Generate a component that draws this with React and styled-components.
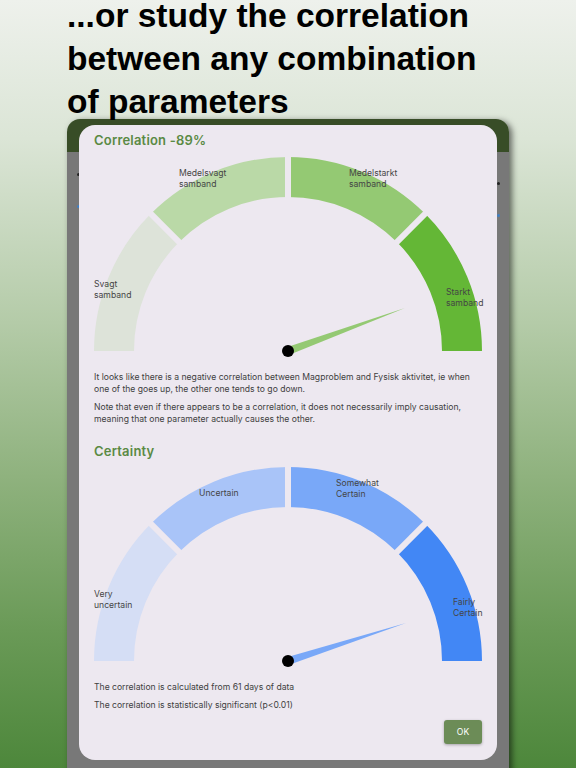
import React from "react";
import styled, { createGlobalStyle } from "styled-components";

const GlobalStyle = createGlobalStyle`
  html, body {
    margin: 0;
    padding: 0;
    overflow: hidden;
  }
`;

const Page = styled.div`
  width: 576px;
  height: 768px;
  overflow: hidden;
  background: linear-gradient(
    to bottom,
    #eef1ec 0%,
    #dbe5d6 18%,
    #b4cba8 42%,
    #8fb27e 62%,
    #6a9a57 82%,
    #4d873b 100%
  );
`;

const Headline = styled.h1`
  position: relative;
  z-index: 1;
  margin: -6px 0 0 67px;
  font-family: "Liberation Sans", Arial, sans-serif;
  font-weight: 700;
  font-size: 33.5px;
  line-height: 43px;
  color: #000;
  white-space: nowrap;
`;

const Device = styled.div`
  position: relative;
  margin: -4px 0 0 67px;
  width: 442px;
  height: 660px;
  box-sizing: border-box;
  padding: 6px 12px 0;
  border-radius: 13px 13px 0 0;
  background: linear-gradient(to bottom, #384d27 0, #384d27 33px, #787878 33px);
  box-shadow: 3px 2px 6px rgba(0, 0, 0, 0.55);
`;

const Peek = styled.span`
  position: absolute;
  left: ${(p) => p.x}px;
  top: ${(p) => p.y}px;
  width: ${(p) => p.w}px;
  height: 3px;
  border-radius: 2px;
  background: ${(p) => p.color};
`;

const Dialog = styled.div`
  position: relative;
  background: #ede8f0;
  border-radius: 16px;
  padding: 7px 15px 16px;
  font-family: Inter, "Noto Sans", sans-serif;
`;

const Heading = styled.h2`
  margin: ${(p) => p.top}px 0 0;
  font-size: 13px;
  line-height: 16px;
  font-weight: 600;
  letter-spacing: 0.2px;
  color: #5a8a44;
`;

const Text = styled.p`
  margin: ${(p) => p.top}px 0 0;
  font-size: 8.6px;
  line-height: 12px;
  color: #404040;
`;

const GaugeSvg = styled.svg`
  display: block;
  overflow: visible;
  margin-top: ${(p) => p.top}px;
  font-family: Inter, "Noto Sans", sans-serif;
  font-size: 8.6px;
`;

const Actions = styled.div`
  display: flex;
  justify-content: flex-end;
  margin-top: 9px;
`;

const OkButton = styled.button`
  width: 38px;
  height: 24px;
  border: none;
  border-radius: 3px;
  background: #6c8c57;
  color: #fff;
  font-family: Inter, "Noto Sans", sans-serif;
  font-size: 8.6px;
  box-shadow: 0 1px 3px rgba(0, 0, 0, 0.3);
`;

const W = 388;
const H = 202;
const CX = 194;
const CY = 195;
const R = 194;
const RI = 154;

function pt(r, deg) {
  const a = (deg * Math.PI) / 180;
  return [CX + r * Math.cos(a), CY - r * Math.sin(a)];
}

function sector(a1, a2) {
  const [x1, y1] = pt(R, a1);
  const [x2, y2] = pt(R, a2);
  const [x3, y3] = pt(RI, a2);
  const [x4, y4] = pt(RI, a1);
  return `M${x1} ${y1} A${R} ${R} 0 0 1 ${x2} ${y2} L${x3} ${y3} A${RI} ${RI} 0 0 0 ${x4} ${y4} Z`;
}

function Gauge({ top, colors, needle, tip, labels }) {
  const dx = tip[0] - CX;
  const dy = tip[1] - CY;
  const len = Math.hypot(dx, dy);
  const nx = (-dy / len) * 4;
  const ny = (dx / len) * 4;
  return (
    <GaugeSvg top={top} width={W} height={H} viewBox={`0 0 ${W} ${H}`}>
      {colors.map((c, i) => (
        <path key={i} d={sector(180 - i * 45, 135 - i * 45)} fill={c} />
      ))}
      {[135, 90, 45].map((a) => {
        const [x1, y1] = pt(RI - 4, a);
        const [x2, y2] = pt(R + 4, a);
        return <line key={a} x1={x1} y1={y1} x2={x2} y2={y2} stroke="#ede8f0" strokeWidth="6" />;
      })}
      {labels.map((l, i) => (
        <text key={i} x={l.x} y={l.y} fill="#454545">
          {l.lines.map((t, j) => (
            <tspan key={j} x={l.x} dy={j === 0 ? 0 : 11.5}>
              {t}
            </tspan>
          ))}
        </text>
      ))}
      <polygon
        points={`${CX + nx},${CY + ny} ${CX - nx},${CY - ny} ${tip[0]},${tip[1]}`}
        fill={needle}
      />
      <circle cx={CX} cy={CY} r="6" fill="#000" />
    </GaugeSvg>
  );
}

const correlationLabels = [
  { x: 0, y: 130.5, lines: ["Svagt", "samband"] },
  { x: 85, y: 19.5, lines: ["Medelsvagt", "samband"] },
  { x: 255, y: 19.5, lines: ["Medelstarkt", "samband"] },
  { x: 352, y: 138.5, lines: ["Starkt", "samband"] },
];

const certaintyLabels = [
  { x: 0, y: 130.5, lines: ["Very", "uncertain"] },
  { x: 105, y: 29.5, lines: ["Uncertain"] },
  { x: 242, y: 19.5, lines: ["Somewhat", "Certain"] },
  { x: 359, y: 138.5, lines: ["Fairly", "Certain"] },
];

export default function App() {
  return (
    <Page>
      <GlobalStyle />
      <Headline>
        ...or study the correlation
        <br />
        between any combination
        <br />
        of parameters
      </Headline>
      <Device>
        <Peek x={10} y={54} w={3} color="#222" />
        <Peek x={10} y={86} w={3} color="#3f7fc4" />
        <Peek x={430} y={63} w={3} color="#222" />
        <Peek x={430} y={95} w={3} color="#3f7fc4" />
        <Dialog>
          <Heading top={0}>Correlation -89%</Heading>
          <Gauge
            top={8}
            colors={["#dde3d9", "#bad9a7", "#94c973", "#64b736"]}
            needle="#94c973"
            tip={[311, 152]}
            labels={correlationLabels}
          />
          <Text top={13}>
            It looks like there is a negative correlation between Magproblem and Fysisk aktivitet, ie when
            one of the goes up, the other one tends to go down.
          </Text>
          <Text top={6}>
            Note that even if there appears to be a correlation, it does not necessarily imply causation,
            meaning that one parameter actually causes the other.
          </Text>
          <Heading top={18}>Certainty</Heading>
          <Gauge
            top={7}
            colors={["#d5def5", "#a9c4f8", "#79a8f8", "#4287f5"]}
            needle="#79a8f8"
            tip={[312, 157]}
            labels={certaintyLabels}
          />
          <Text top={13}>The correlation is calculated from 61 days of data</Text>
          <Text top={6}>The correlation is statistically significant (p&lt;0.01)</Text>
          <Actions>
            <OkButton>OK</OkButton>
          </Actions>
        </Dialog>
      </Device>
    </Page>
  );
}
